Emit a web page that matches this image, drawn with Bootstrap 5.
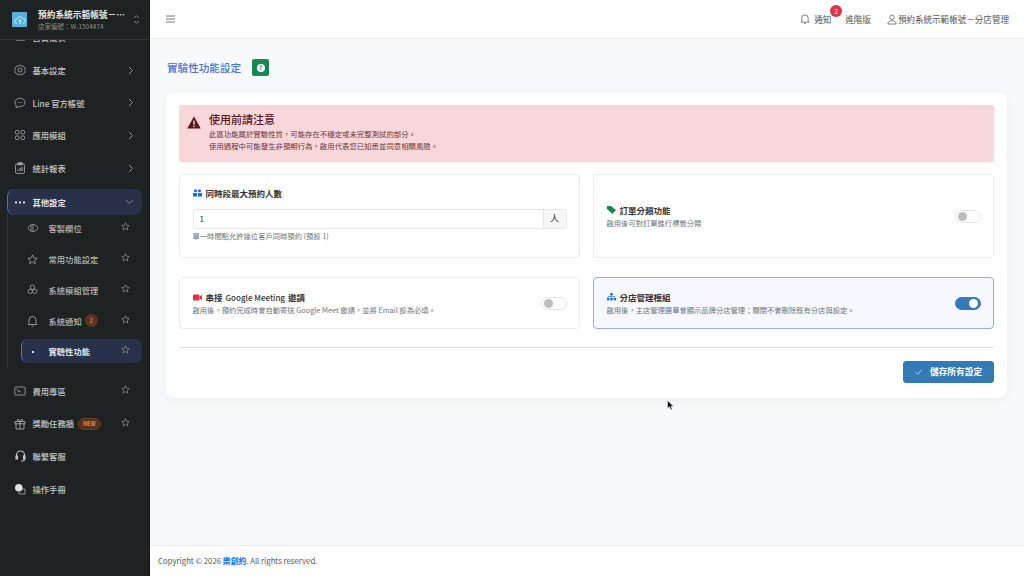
<!DOCTYPE html>
<html lang="zh-Hant">
<head>
    <meta charset="UTF-8">
    <meta name="viewport" content="width=device-width, initial-scale=1.0">
    <title>實驗性功能設定</title>
    <link href="https://cdn.jsdelivr.net/npm/bootstrap@5.3.3/dist/css/bootstrap.min.css" rel="stylesheet" crossorigin="anonymous">
    <style>
        html, body { height: 100%; overflow: hidden; }
        body { font-family: "Noto Sans CJK TC", "Noto Sans", sans-serif; font-size: 8.55px; background: #f8f9fb; color: #333; }
        .shell { height: 576px; }
        .side { width: 150px; background: #1f2222; border-right: 1px solid #151717; color: #c4c6c6; flex: none; }
        .brand { height: 40px; border-bottom: 1px solid #333737; background: #1f2222; position: relative; z-index: 2; padding: 0 9px 0 12px; }
        .brand-logo { width: 15px; height: 15px; background: #58afd8; border-radius: 1px; flex: none; margin-right: 11px; }
        .brand-name { font-size: 8.7px; font-weight: 700; color: #e6e7e7; line-height: 13px; white-space: nowrap; }
        .brand-no { font-size: 6.5px; color: #8d9090; line-height: 10px; }
        .menu-list { margin-top: -19px; padding: 0 7px; overflow: hidden; }
        .menu-row { height: 32.7px; padding: 0 8px 0 6px; font-size: 8.3px; font-weight: 500; color: #c4c6c6; border-radius: 7px; border-left: 1.5px solid transparent; }
        .menu-row svg { flex: none; }
        .menu-ico { width: 12px; margin-right: 6.5px; text-align: center; line-height: 0; }
        .menu-open { height: 26px; background: #28304a; border-left-color: #4a72d8; color: #e4e5e6; margin-top: 4.5px; font-weight: 700; }
        .sub-list { margin-top: -2px; border-left: 1px solid #303434; padding-bottom: 6px; }
        .sub-row { height: 30.8px; padding: 0 8px 0 2.5px; font-weight: 500; font-size: 8.3px; color: #b4b6b6; border-radius: 7px; border-left: 1.5px solid transparent; margin-left: 13px; }
        .sub-now { height: 24px; background: #28304a; border-left-color: #4a72d8; color: #e4e5e6; font-weight: 700; margin-top: 3px; }
        .sub-ico { width: 16px; margin-right: 8px; line-height: 0; text-align: center; }
        .star-ico { width: 9px; height: 9px; margin-left: auto; margin-right: 4.5px; margin-top: -3px; flex: none; }
        .num-tag { width: 13px; height: 13px; border-radius: 50%; background: #5c3420; color: #e78a3c; font-size: 6px; margin-left: 3px; }
        .new-tag { font-size: 5.5px; font-weight: 700; padding: 1px 4px; background: #54301d; color: #e78a3c; border: 1px solid #6f3f22; border-radius: 7px; margin-left: 4px; }
        .after-sub { margin-top: 5.5px; }
        .topbar { height: 39px; background: #fff; border-bottom: 1px solid #e9ebee; padding: 0 15px 0 16px; color: #555; }
        .top-bell { position: relative; margin-right: 14px; }
        .bell-num { position: absolute; top: -8px; left: 30px; width: 12px; height: 12px; border-radius: 50%; background: #dc3545; color: #fff; font-size: 6.5px; line-height: 12px; text-align: center; }
        .top-plan { margin-right: 16px; }
        .page-head { padding: 21px 17px 0; height: 53px; }
        .page-title { font-size: 10.6px; font-weight: 500; color: #4a72d8; margin: 0; line-height: 16px; }
        .help-btn { width: 17px; height: 17px; background: #198754; border-radius: 2px; margin-left: 11px; margin-top: -1px; }
        .help-dot { width: 8px; height: 8px; border-radius: 50%; background: #fff; color: #198754; font-size: 6px; font-weight: 700; line-height: 8px; text-align: center; }
        .main-card { margin: 0 17px 0 16px; padding: 13px; background: #fff; border-radius: 8px; border: 0; box-shadow: 0 2px 10px rgba(40, 50, 70, .06); height: 306px; }
        .warn-box { height: 57px; background: #f8d7da; border-radius: 3px; color: #58151c; padding: 6px 8px 0; box-shadow: 0 1px 2px rgba(0,0,0,.05); margin-bottom: 12px; }
        .warn-icon { margin-top: 5px; margin-right: 8px; flex: none; }
        .warn-title { font-size: 11px; font-weight: 500; line-height: 16px; margin: 0 0 1px; }
        .warn-text { font-size: 7.4px; line-height: 11.5px; color: #6b343a; }
        .opt-grid { display: grid; grid-template-columns: 401px 401px; column-gap: 13px; row-gap: 19px; grid-template-rows: 84px 52px; }
        .opt-box { border: 1px solid #e9ebef; border-radius: 4px; padding: 0 12.5px; background: #fff; min-width: 0; }
        .opt-tall { padding-top: 11.5px; }
        .opt-on { border-color: #93aee9; background: #f6f8fd; }
        .opt-title { font-size: 8.5px; font-weight: 700; color: #333; line-height: 13px; }
        .opt-title svg { margin-right: 4px; flex: none; }
        .opt-title span { font-weight: 500; font-size: 8px; margin: 0 3px; }
        .opt-desc { font-size: 7.3px; color: #6c757d; line-height: 11px; margin-top: 1px; }
        .opt-tall .opt-desc { margin-top: 2px; }
        .num-wrap { height: 20px; border: 1px solid #e6e8ec; border-radius: 3px; margin-top: 9.5px; }
        .num-val { padding-left: 6px; font-size: 8px; flex: 1; line-height: 18px; }
        .num-unit { width: 23px; background: #f6f7f9; border-left: 1px solid #e6e8ec; font-size: 9px; text-align: center; line-height: 18px; }
        .flip { width: 26px; height: 13px; border: 1px solid #e2e4e8; border-radius: 7px; padding: 0 2px; background: #fff; flex: none; }
        .flip i { width: 9px; height: 9px; background: #bdbdbd; border-radius: 50%; display: block; }
        .flip-on { background: #337ab7; border-color: #337ab7; justify-content: flex-end; }
        .flip-on i { background: #fff; }
        .split-line { border-top: 1px solid #dde0e5; margin: 18px 0 13px; }
        .save-btn { width: 91px; height: 22px; padding: 0; font-size: 8.7px; font-weight: 700; background: #337ab7; border-color: #337ab7; border-radius: 3px; }
        .foot-bar { height: 31px; background: #fff; border-top: 1px solid #e9ebee; padding-left: 8px; font-size: 7.8px; color: #555; }
        .foot-bar b { color: #0d6efd; font-weight: 700; }
        .arrow-mouse { position: absolute; left: 667px; top: 400px; }
    </style>
</head>
<body>
<svg width="0" height="0" class="position-absolute">
    <symbol id="star" viewBox="0 0 12 12"><path d="M6 1l1.500 3.300 3.500.4-2.600 2.400.7 3.500L6 8.800l-3.100 1.800.7-3.500L1 4.700l3.500-.4z" fill="none" stroke="#8d9090"/></symbol>
    <symbol id="chev" viewBox="0 0 6 9"><path d="M1 1l3.500 3.500L1 8" fill="none" stroke="#8d9090"/></symbol>
</svg>
<div class="shell d-flex">
    <!-- sidebar -->
    <div class="side d-flex flex-column">
        <div class="brand d-flex align-items-center">
            <div class="brand-logo d-flex align-items-center justify-content-center">
                <svg width="12" height="12" viewBox="0 0 12 12" fill="none" stroke="#dff1fa" stroke-width=".9"><path d="M3 9.500a2.200 2.200 0 0 1 0-4.400 3 3 0 0 1 5.600-.8 2.500 2.500 0 0 1 .4 5"/><path d="M7.600 6H5.400l-.3 1.600c1.400-.4 2.400.3 2.100 1.200-.2.800-1.400 1-2.200.4"/></svg>
            </div>
            <div>
                <div class="brand-name">預約系統示範帳號－…</div>
                <div class="brand-no">店家編號：W-1504474</div>
            </div>
            <svg class="ms-auto" width="7" height="11" viewBox="0 0 7 11" fill="none" stroke="#9a9d9d" stroke-width=".8"><path d="M1.200 4 3.500 1.600 5.800 4M1.200 7l2.300 2.400L5.800 7"/></svg>
        </div>
        <div class="menu-list">
            <div class="menu-row d-flex align-items-center"><span class="menu-ico"><svg width="11" height="11" viewBox="0 0 11 11" fill="none" stroke="#b4b6b6"><path d="M1 3h9M1 8h9"/></svg></span>首頁儀表</div>
            <div class="menu-row d-flex align-items-center"><span class="menu-ico"><svg width="12" height="12" viewBox="0 0 12 12" fill="none" stroke="#a9abab" stroke-width=".8"><circle cx="6" cy="6" r="2"/><path d="M6 1l1.200.9 1.500-.2.800 1.300 1.400.6-.2 1.500.8 1.200-.8 1.200.2 1.100-1.400.6-.8 1.300-1.500-.2L6 11l-1.200-.6-1.500.2-.8-1.300-1.400-.6.2-1.100L.5 6.400l.8-1.200-.2-1.500 1.400-.6.8-1.300 1.500.2z"/></svg></span>基本設定<svg class="ms-auto" width="6" height="9"><use href="#chev"/></svg></div>
            <div class="menu-row d-flex align-items-center"><span class="menu-ico"><svg width="12" height="12" viewBox="0 0 12 12" fill="none" stroke="#a9abab" stroke-width=".8"><path d="M6 1.200c2.900 0 5 1.900 5 4.300s-2.100 4.300-5 4.300c-.6 0-1.200-.1-1.700-.2L2 10.800l.3-2.100C1.500 7.900 1 6.800 1 5.500 1 3.100 3.100 1.200 6 1.200z"/><path d="M3.700 5.500h.8M5.600 5.500h.8M7.500 5.500h.8"/></svg></span>Line 官方帳號<svg class="ms-auto" width="6" height="9"><use href="#chev"/></svg></div>
            <div class="menu-row d-flex align-items-center"><span class="menu-ico"><svg width="12" height="12" viewBox="0 0 12 12" fill="none" stroke="#a9abab" stroke-width=".8"><rect x="1.500" y="1.500" width="3.500" height="3.500" rx="1"/><rect x="7" y="1.500" width="3.500" height="3.500" rx="1"/><rect x="1.500" y="7" width="3.500" height="3.500" rx="1"/><rect x="7" y="7" width="3.500" height="3.500" rx="1"/></svg></span>應用模組<svg class="ms-auto" width="6" height="9"><use href="#chev"/></svg></div>
            <div class="menu-row d-flex align-items-center"><span class="menu-ico"><svg width="12" height="12" viewBox="0 0 12 12" fill="none" stroke="#a9abab" stroke-width=".8"><rect x="1.500" y="2" width="9" height="9.500" rx="1.500"/><rect x="4" y=".8" width="4" height="2" fill="#a9abab"/><path d="M4 9V7.500M6 9V6M8 9V5" stroke-width="1.100"/></svg></span>統計報表<svg class="ms-auto" width="6" height="9"><use href="#chev"/></svg></div>
            <div class="menu-row menu-open d-flex align-items-center"><span class="menu-ico"><svg width="10" height="3" viewBox="0 0 10 3" fill="#d8d9da"><rect x="0" y=".5" width="2" height="2"/><rect x="4" y=".5" width="2" height="2"/><rect x="8" y=".5" width="2" height="2"/></svg></span>其他設定<svg class="ms-auto" width="9" height="6" viewBox="0 0 9 6" fill="none" stroke="#7e8290"><path d="M1 1l3.500 3.500L8 1"/></svg></div>
            <div class="sub-list">
                <div class="sub-row d-flex align-items-center"><span class="sub-ico"><svg width="12" height="10" viewBox="0 0 12 10" fill="none" stroke="#a0a2a2" stroke-width=".8"><ellipse cx="6" cy="5" rx="4.800" ry="3.400"/><path d="M6 1v8M4 1.800v6.400"/></svg></span>客製欄位<svg class="star-ico"><use href="#star"/></svg></div>
                <div class="sub-row d-flex align-items-center"><span class="sub-ico"><svg width="11" height="11" viewBox="0 0 12 12" fill="none" stroke="#a0a2a2" stroke-width=".9"><path d="M6 1l1.500 3.300 3.500.4-2.600 2.400.7 3.500L6 8.800l-3.100 1.800.7-3.500L1 4.700l3.500-.4z"/></svg></span>常用功能設定<svg class="star-ico"><use href="#star"/></svg></div>
                <div class="sub-row d-flex align-items-center"><span class="sub-ico"><svg width="11" height="11" viewBox="0 0 12 12" fill="none" stroke="#a0a2a2" stroke-width=".9"><circle cx="6" cy="3.500" r="2.400"/><circle cx="3.500" cy="8" r="2.400"/><circle cx="8.500" cy="8" r="2.400"/></svg></span>系統模組管理<svg class="star-ico"><use href="#star"/></svg></div>
                <div class="sub-row d-flex align-items-center"><span class="sub-ico"><svg width="11" height="12" viewBox="0 0 11 12" fill="none" stroke="#a0a2a2" stroke-width=".9"><path d="M2 8.500V5a3.500 3.500 0 0 1 7 0v3.500l1 1H1zM4.500 11h2M5.500 1v.6"/></svg></span>系統通知<span class="num-tag d-inline-flex align-items-center justify-content-center">2</span><svg class="star-ico"><use href="#star"/></svg></div>
                <div class="sub-row sub-now d-flex align-items-center"><span class="sub-ico"><svg width="2" height="2" viewBox="0 0 2 2"><rect width="2" height="2" fill="#e4e5e6"/></svg></span>實驗性功能<svg class="star-ico"><use href="#star"/></svg></div>
            </div>
            <div class="menu-row after-sub d-flex align-items-center"><span class="menu-ico"><svg width="12" height="10" viewBox="0 0 12 10" fill="none" stroke="#a9abab" stroke-width=".8"><rect x=".8" y="1" width="10.400" height="8" rx=".8"/><path d="M2.500 3.200l2 1.500-.3 1h2.500"/></svg></span>費用專區<svg class="star-ico"><use href="#star"/></svg></div>
            <div class="menu-row d-flex align-items-center"><span class="menu-ico"><svg width="12" height="12" viewBox="0 0 12 12" fill="none" stroke="#a9abab" stroke-width=".9"><path d="M1 3.500h10v2.300H1zM2 5.800v5.200h8V5.800M6 3.500V11M6 3.500C4.500 3.500 3 3 3.300 1.800 3.700.8 5.300 1.500 6 3.500c.7-2 2.300-2.700 2.700-1.700.3 1.200-1.200 1.700-2.700 1.700z"/></svg></span>獎勵任務牆<span class="new-tag">NEW</span><svg class="star-ico"><use href="#star"/></svg></div>
            <div class="menu-row d-flex align-items-center"><span class="menu-ico"><svg width="11" height="12" viewBox="0 0 11 12" fill="none" stroke="#c4c6c6" stroke-width="1.100"><path d="M1.500 7V5a4 4 0 0 1 8 0v2M9.500 8v1.500c0 1-1 1.500-2 1.500H6"/><rect x="1" y="6" width="1.500" height="3" fill="#c4c6c6"/><rect x="8.500" y="6" width="1.500" height="3" fill="#c4c6c6"/></svg></span>聯繫客服</div>
            <div class="menu-row d-flex align-items-center"><span class="menu-ico"><svg width="12" height="12" viewBox="0 0 12 12"><path d="M6 6h5v5H5V9" fill="none" stroke="#a9abab" stroke-width=".8"/><circle cx="4.800" cy="4.800" r="3.800" fill="#e0e1e1"/></svg></span>操作手冊</div>
        </div>
    </div>

    <!-- content -->
    <div class="flex-grow-1 d-flex flex-column" style="min-width:0">
        <div class="topbar d-flex align-items-center">
            <svg width="9" height="8" viewBox="0 0 9 8" fill="none" stroke="#777"><path d="M0 1h9M0 4h9M0 7h9"/></svg>
            <div class="ms-auto d-flex align-items-center">
                <div class="top-bell d-flex align-items-center">
                    <svg class="me-1" width="10" height="12" viewBox="0 0 11 12" fill="none" stroke="#666" stroke-width=".9"><path d="M2 8.500V5a3.500 3.500 0 0 1 7 0v3.500l1 1H1zM4.500 11h2"/></svg>通知
                    <span class="bell-num">2</span>
                </div>
                <div class="top-plan">進階版</div>
                <div class="d-flex align-items-center">
                    <svg style="margin-right:1px" width="10" height="11" viewBox="0 0 11 12" fill="none" stroke="#666" stroke-width=".9"><circle cx="5.500" cy="3.500" r="2.500"/><path d="M1 11c0-2.600 2-3.700 4.500-3.700S10 8.400 10 11z"/></svg>預約系統示範帳號－分店管理
                </div>
            </div>
        </div>

        <div class="flex-grow-1">
            <div class="page-head d-flex align-items-start">
                <h1 class="page-title">實驗性功能設定</h1>
                <div class="help-btn d-flex align-items-center justify-content-center"><span class="help-dot">?</span></div>
            </div>
            <div class="card main-card">
                <div class="warn-box d-flex">
                    <svg class="warn-icon" width="14" height="13" viewBox="0 0 14 13"><path d="M7 .5 13.800 12.500H.2z" fill="#58151c"/><rect x="6.300" y="4.500" width="1.400" height="4.200" fill="#f8d7da"/><rect x="6.300" y="9.700" width="1.400" height="1.400" fill="#f8d7da"/></svg>
                    <div>
                        <p class="warn-title">使用前請注意</p>
                        <div class="warn-text">此區功能屬於實驗性質，可能存在不穩定或未完整測試的部分。</div>
                        <div class="warn-text">使用過程中可能發生非預期行為，啟用代表您已知悉並同意相關風險。</div>
                    </div>
                </div>
                <div class="opt-grid">
                    <div class="opt-box opt-tall d-flex flex-column">
                        <div class="opt-title d-flex align-items-center"><svg width="9" height="8" viewBox="0 0 9 8" fill="#0d6efd"><circle cx="2.500" cy="1.800" r="1.500"/><circle cx="6.500" cy="1.800" r="1.500"/><path d="M0 4h4v3.500H0zM5 4h4v3.500H5z"/></svg>同時段最大預約人數</div>
                        <div class="num-wrap d-flex">
                            <div class="num-val">1</div>
                            <div class="num-unit">人</div>
                        </div>
                        <div class="opt-desc">單一時間點允許幾位客戶同時預約 (預設 1)</div>
                    </div>
                    <div class="opt-box d-flex align-items-center justify-content-between">
                        <div>
                            <div class="opt-title d-flex align-items-center"><svg width="9" height="8" viewBox="0 0 9 8" fill="#198754"><path d="M0 0h4l5 4-3.500 4L0 3z"/></svg>訂單分類功能</div>
                            <div class="opt-desc">啟用後可對訂單進行標籤分類</div>
                        </div>
                        <div class="flip d-flex align-items-center"><i></i></div>
                    </div>
                    <div class="opt-box d-flex align-items-center justify-content-between">
                        <div>
                            <div class="opt-title d-flex align-items-center"><svg width="9" height="7" viewBox="0 0 9 7" fill="#dc3545"><rect width="6.500" height="6" y=".5" rx="1"/><path d="M6.500 2.500 9 1v5L6.500 4.500z"/></svg>串接<span>Google Meeting</span>邀請</div>
                            <div class="opt-desc">啟用後，預約完成時會自動寄送 Google Meet 邀請，並將 Email 設為必填。</div>
                        </div>
                        <div class="flip d-flex align-items-center"><i></i></div>
                    </div>
                    <div class="opt-box opt-on d-flex align-items-center justify-content-between">
                        <div>
                            <div class="opt-title d-flex align-items-center"><svg width="9" height="8" viewBox="0 0 9 8" fill="#0d6efd"><rect x="3.300" y="0" width="2.400" height="2.400"/><rect x="0" y="5" width="2.400" height="2.400"/><rect x="3.300" y="5" width="2.400" height="2.400"/><rect x="6.600" y="5" width="2.400" height="2.400"/><path d="M1 5V3.500h7V5M4.500 2.400V5" fill="none" stroke="#0d6efd" stroke-width=".6"/></svg>分店管理模組</div>
                            <div class="opt-desc">啟用後，主店管理選單會顯示品牌分店管理；關閉不會刪除既有分店與設定。</div>
                        </div>
                        <div class="flip flip-on d-flex align-items-center"><i></i></div>
                    </div>
                </div>
                <div class="split-line"></div>
                <div class="d-flex justify-content-end">
                    <button type="button" class="btn btn-primary save-btn d-flex align-items-center justify-content-center">
                        <svg class="me-2" width="7" height="6" viewBox="0 0 7 6" fill="none" stroke="#dbe8f3" stroke-width=".8"><path d="M.5 3.200 2.600 5.200 6.500.8"/></svg>儲存所有設定
                    </button>
                </div>
            </div>
        </div>

        <div class="foot-bar d-flex align-items-center">Copyright © 2026&nbsp;<b>樂創約</b>. All rights reserved.</div>
    </div>
</div>
<svg class="arrow-mouse" width="7" height="11" viewBox="0 0 7 11"><path d="M.5.500v8l2-1.800 1.200 3 1.400-.6-1.200-2.800h2.600z" fill="#111" stroke="#fff" stroke-width=".5"/></svg>
<script src="https://cdn.jsdelivr.net/npm/bootstrap@5.3.3/dist/js/bootstrap.bundle.min.js" crossorigin="anonymous"></script>
</body>
</html>
